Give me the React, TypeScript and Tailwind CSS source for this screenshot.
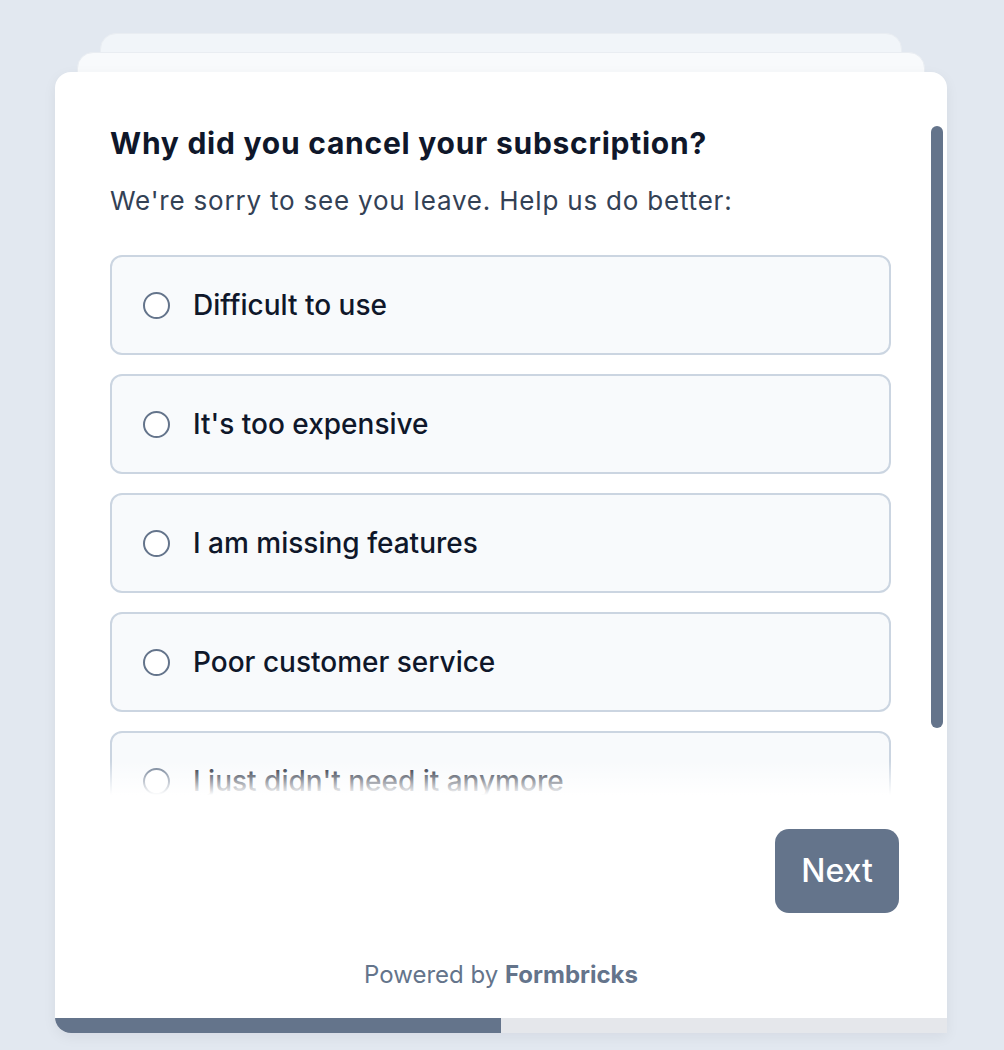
import React from 'react';

const options = [
  'Difficult to use',
  "It's too expensive",
  'I am missing features',
  'Poor customer service',
  "I just didn't need it anymore",
];

const font = { fontFamily: 'Inter, "Noto Sans", sans-serif' };

export default function App() {
  return (
    <div className="min-h-[1050px] w-[1004px] bg-[#e2e8f0] pt-[33px] pl-[55px]" style={font}>
      <div className="relative w-[892px]">
        {/* Stacked cards behind */}
        <div className="mx-[45px] h-[24px] rounded-t-[16px] bg-[#f1f5f9] border border-[#e9edf2]" />
        <div className="mx-[22px] -mt-[5px] h-[25px] rounded-t-[16px] bg-[#f8fafc] border border-[#e9edf2]" />

        {/* Main card */}
        <div className="relative -mt-[5px] h-[961px] rounded-t-[16px] rounded-bl-[16px] bg-white shadow-[0_4px_14px_rgba(15,23,42,0.06)] overflow-hidden flex flex-col">
          <div className="relative h-[723px] shrink-0 overflow-hidden">
            <div className="pl-[55px] pr-[56px] pt-[53px]">
              <h1 className="text-[30px] leading-[36px] font-bold tracking-[0.75px] text-[#0f172a]">
                Why did you cancel your subscription?
              </h1>
              <p className="mt-[24px] text-[26px] leading-[32px] tracking-[0.8px] text-[#334155]">
                We're sorry to see you leave. Help us do better:
              </p>
              <div className="mt-[38px] flex flex-col gap-[19px]">
                {options.map((o) => (
                  <div
                    key={o}
                    className="h-[100px] shrink-0 flex items-center gap-[23px] rounded-[12px] border-2 border-[#cbd5e1] bg-[#f8fafc] px-[31px]"
                  >
                    <span className="h-[27px] w-[27px] rounded-full border-2 border-[#64748b] bg-white shrink-0" />
                    <span className="text-[28px] font-medium text-[#0f172a]">{o}</span>
                  </div>
                ))}
              </div>
            </div>
            {/* fade at bottom of scroll area */}
            <div className="absolute left-0 right-0 bottom-0 h-[34px] bg-gradient-to-b from-white/0 to-white" />
            {/* scrollbar thumb */}
            <div className="absolute right-[4px] top-[54px] w-[12px] h-[602px] rounded-full bg-[#64748b]" />
          </div>

          <div className="flex justify-end pr-[48px] pt-[34px]">
            <button className="h-[84px] w-[124px] rounded-[14px] bg-[#64748b] text-white text-[32px] font-medium">
              Next
            </button>
          </div>

          <div className="mt-auto mb-[27px] text-center text-[24px] leading-[32px] text-[#64748b]">
            Powered by <span className="font-bold">Formbricks</span>
          </div>

          <div className="h-[15px] flex bg-[#e5e7eb]">
            <div className="w-[446px] bg-[#64748b]" />
          </div>
        </div>
      </div>
    </div>
  );
}
